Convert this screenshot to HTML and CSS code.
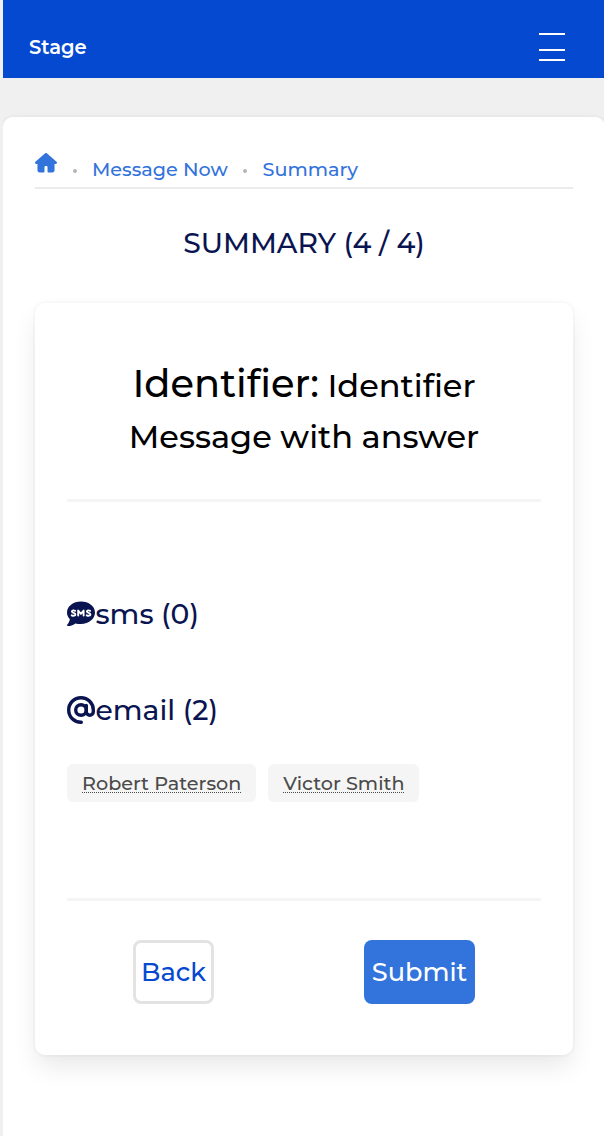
FILE: index.html
```html
<!DOCTYPE html>
<html lang="en">
<head>
<meta charset="utf-8">
<title>Summary</title>
<link rel="stylesheet" href="styles.css">
</head>
<body>
<header class="navbar">
  <span class="brand">Stage</span>
  <button class="burger" aria-label="Menu"><span></span><span></span><span></span></button>
</header>
<main class="panel">
  <nav class="breadcrumb">
    <a class="home" aria-label="Home"><svg width="22" height="19.500" viewBox="0 0 576 512"><path fill="currentColor" d="M575.8 255.500c0 18-15 32.100-32 32.100h-32l.7 160.200c0 36-24 64.200-56 64.200H352c-18 0-24-14-24-24V376c0-18-14-32-32-32h-16c-18 0-32 14-32 32v112c0 16-12 24-24 24H120c-32 0-56-26-56-56V287.600H32c-18 0-32-14-32-32.100 0-9 3-17 10-24L266.400 8c7-7 15-8 22-8s15 2 21 7l255.400 224.500c8 7 12 15 11 24z"/></svg></a>
    <i class="dot"></i>
    <a class="link-message">Message Now</a>
    <i class="dot"></i>
    <a>Summary</a>
  </nav>
  <h1 class="title">SUMMARY (4 / 4)</h1>
  <section class="box">
    <div class="identifier"><strong>Identifier:</strong> Identifier<br>Message with answer</div>
    <hr>
    <div class="channels">
      <h2 class="channel sms"><svg width="28" height="28" viewBox="0 0 28 28"><path fill="currentColor" d="M14 1.500C6.300 1.500 0 6.200 0 12.500c0 2.600 1 4.800 2.900 6.700C2.500 21.300 1.200 23.700.2 24.800c-.5.600-.1 1.200.6 1.200 3.300 0 5.900-1.300 7.500-2.600 1.700.4 3.700.6 5.700.6 7.700 0 14-5.200 14-11.500S21.700 1.500 14 1.500z"/><g fill="none" stroke="#fff" stroke-width="1.900" stroke-linecap="round" stroke-linejoin="round"><path d="M8.100 10.800C6.800 10.100 4.900 10.200 4.900 11.600c0 1.700 3.500.9 3.500 2.800 0 1.500-2.200 1.600-3.700.9M11.200 15.500v-5l2.700 3.300 2.700-3.300v5M23.100 10.800c-1.300-.7-3.200-.6-3.200.8 0 1.700 3.500.9 3.500 2.800 0 1.500-2.200 1.600-3.700.9"/></g></svg><span>sms (0)</span></h2>
      <h2 class="channel email"><svg width="28" height="28" viewBox="0 0 28 28"><g fill="none" stroke="currentColor" stroke-width="3.400" stroke-linecap="round"><path d="M14.300 26.200C7.100 26.400 1.700 20.900 1.700 14 1.700 7.200 7.200 1.700 14 1.700S26.300 7.200 26.300 14v1.700c0 4.700-7 4.700-7 0V9.500"/><circle cx="14" cy="14" r="5.300"/></g></svg><span>email (2)</span></h2>
      <div class="tags"><span class="tag"><abbr>Robert Paterson</abbr></span><span class="tag"><abbr>Victor Smith</abbr></span></div>
    </div>
    <hr>
    <div class="actions">
      <button class="button back">Back</button>
      <button class="button submit">Submit</button>
    </div>
  </section>
</main>
</body>
</html>
```
FILE: styles.css
```css
* { box-sizing: border-box; }
html { background: #f0f0f0; height: 100%; overflow: hidden; }
body { margin: 0 0 0 3px; height: 1136px; display: flex; flex-direction: column; gap: 39px; font: 500 19.2px/30px Montserrat, Inter, sans-serif; }
.navbar { flex: 0 0 78px; background: #0549d1; color: #fff; display: flex; justify-content: space-between; padding: 32px 39px 0 26px; }
.brand { font-weight: 600; font-size: 19.5px; }
button { font: inherit; }
.burger { background: none; border: 0; padding: 1px 0 0; width: 26px; height: 30px; display: flex; flex-direction: column; align-items: stretch; justify-content: flex-start; gap: 8px; }
.burger span { flex: 0 0 2px; background: #fff; }
.burger span:first-child { margin-bottom: 6px; }
.panel { flex: 0 0 1060px; width: 602px; background: #fff; border-radius: 10px; padding: 32px; box-shadow: 0 13px 26px -3px rgba(10,10,10,.1), 0 0 0 2px rgba(10,10,10,.02); }
.breadcrumb { width: 538px; height: 40px; border-bottom: 2px solid #ebebeb; display: flex; color: #3273dc; padding-top: 5px; white-space: nowrap; }
.home { width: 22px; height: 20px; margin-top: -1px; }
.home svg { display: block; }
.dot { flex: none; width: 4px; height: 4px; border-radius: 50%; background: #b5b5b5; margin: 15px 15.500px 0 15.500px; }
.link-message { width: 135.600px; }
.title { margin: 36px 0 0; height: 36px; line-height: 37px; width: 538px; text-align: center; color: #0a1450; font-size: 28.2px; font-weight: 500; }
.box { margin-top: 42px; width: 538px; height: 752px; border-radius: 10px; background: #fff; padding: 55px 32px 0; box-shadow: 0 13px 26px -3px rgba(10,10,10,.1), 0 0 0 2px rgba(10,10,10,.02); }
.identifier { height: 141px; text-align: center; color: #000; font-size: 32px; line-height: 51.200px; white-space: nowrap; }
.identifier strong { font-size: 38.4px; font-weight: 500; }
hr { margin: 0; border: 0; height: 3px; background: #f5f5f5; }
.channels { height: 396px; padding-top: 94px; }
.channel { margin: 0 0 60px; height: 36px; display: flex; align-items: center; color: #0a1450; font-size: 28.2px; font-weight: 500; line-height: 37px; white-space: nowrap; }
.channel svg { flex: none; margin-right: .5px; }
.email { margin-bottom: 36px; }
.tags { display: flex; gap: 12px; }
.tag { height: 38px; border-radius: 6px; background: #f5f5f5; padding: 8px 15px; color: #4a4a4a; line-height: 22px; white-space: nowrap; }
.tag abbr { display: block; height: 21px; border-bottom: 1px dotted #4a4a4a; }
.actions { padding: 39px 66px 0; display: flex; justify-content: space-between; }
.button { height: 64px; border-radius: 8px; padding: 0; font-size: 25.6px; font-weight: 500; white-space: nowrap; }
.back { width: 81px; border: 3px solid #e3e3e3; background: #fff; color: #0549d1; }
.submit { width: 111px; border: 0; background: #3273dc; color: #fff; }
```
